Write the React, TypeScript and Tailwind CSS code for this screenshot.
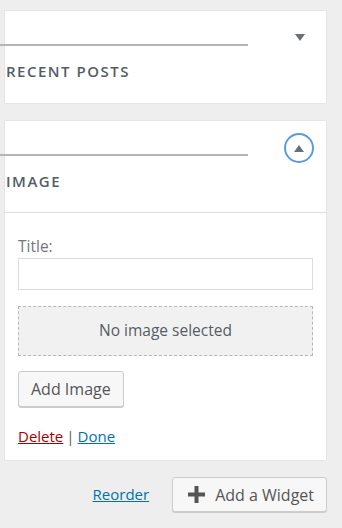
import React from "react";

const font = { fontFamily: '"Open Sans", "Noto Sans", sans-serif' };

function Header({ title, open }: { title: string; open?: boolean }) {
  return (
    <div className={"relative h-[92px] " + (open ? "border-b border-[#dddddd]" : "")}>
      <div className="absolute left-[-6px] top-[33px] h-[2px] w-[249px] bg-[#b4b4b4]" />
      {open ? (
        <div className="absolute left-[279px] top-[12px] flex h-[30px] w-[30px] items-center justify-center rounded-full border-2 border-[#5b9dd9]">
          <svg width="10" height="7" viewBox="0 0 10 7">
            <path d="M0 7 L5 0 L10 7 Z" fill="#6b7075" />
          </svg>
        </div>
      ) : (
        <div className="absolute left-[290px] top-[23px]">
          <svg width="10" height="7" viewBox="0 0 10 7">
            <path d="M0 0 L10 0 L5 7 Z" fill="#6b7075" />
          </svg>
        </div>
      )}
      <div className="absolute left-[1px] top-[50px] text-[15px] font-semibold leading-[20px] tracking-[1.5px] text-[#555d66]">
        {title}
      </div>
    </div>
  );
}

export default function App() {
  return (
    <div className="h-[528px] w-[342px] overflow-hidden bg-[#eeeeee] pl-[4px] pr-[15px] pt-[10px]" style={font}>
      <div className="border border-[#e5e5e5] bg-white">
        <Header title="RECENT POSTS" />
      </div>
      <div className="mt-[16px] border border-[#e5e5e5] bg-white">
        <Header title="IMAGE" open />
        <div className="px-[13px] pt-[23px] pb-[14px]">
          <div className="text-[15.5px] leading-[20px] text-[#72777c]">Title:</div>
          <div className="mt-[2px] h-[32px] w-full border border-[#dddddd] bg-white" />
          <div className="mt-[16px] flex h-[50px] w-full items-center justify-center border border-dashed border-[#b4b9be] bg-[#f1f1f1] text-[15.5px] text-[#555d66]">
            No image selected
          </div>
          <button className="mt-[15px] h-[36px] rounded-[3px] border border-[#cccccc] bg-[#f7f7f7] px-[12px] text-[16px] text-[#555555] shadow-[0_1px_0_#cccccc]">
            Add Image
          </button>
          <div className="mt-[19px] flex items-center text-[15px] leading-[20px]">
            <a className="text-[#a00] underline">Delete</a>
            <span className="mx-[3px] text-[#555d66]">|</span>
            <a className="text-[#0073aa] underline">Done</a>
          </div>
        </div>
      </div>
      <div className="mt-[16px] flex items-center justify-end gap-[22px]">
        <a className="mr-[1px] text-[15px] text-[#0073aa] underline">Reorder</a>
        <button className="flex h-[35px] items-center rounded-[3px] border border-[#cccccc] bg-[#f7f7f7] pl-[15px] pr-[12px] text-[16px] text-[#555555] shadow-[0_1px_0_#cccccc]">
          <svg width="17" height="17" viewBox="0 0 17 17" className="mr-[10px]">
            <path d="M6.5 0 H10.5 V6.5 H17 V10.5 H10.5 V17 H6.5 V10.5 H0 V6.5 H6.5 Z" fill="#555555" />
          </svg>
          Add a Widget
        </button>
      </div>
    </div>
  );
}
